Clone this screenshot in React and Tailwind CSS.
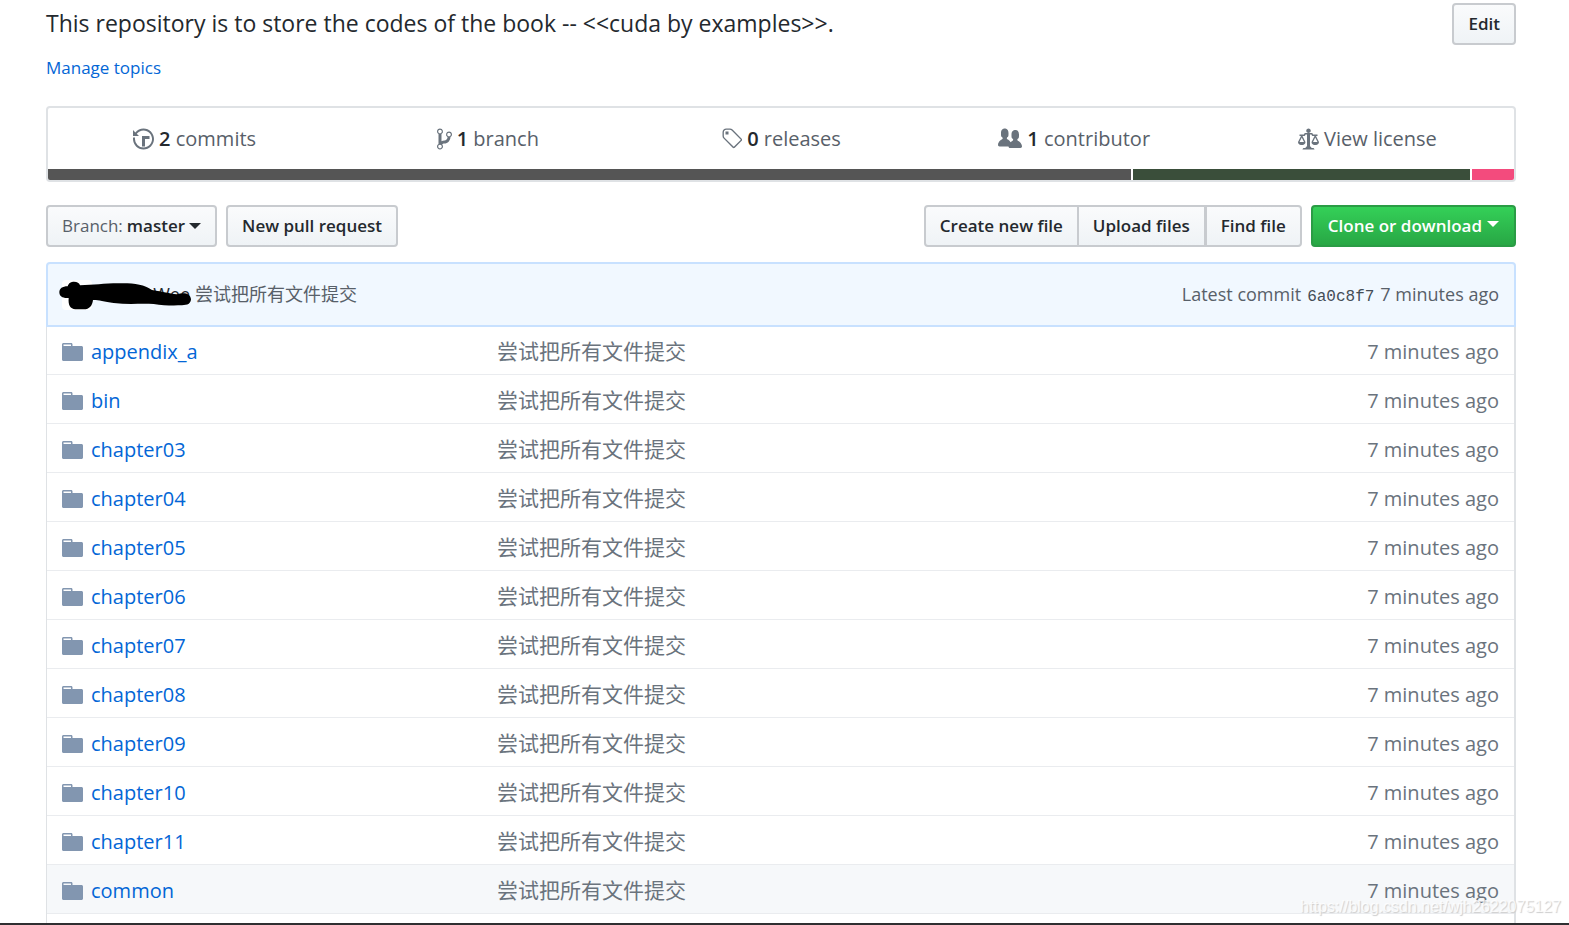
import React from "react";
import clsx from "clsx";

const MESSAGE = "尝试把所有文件提交";

const ICONS = {
  history: {
    width: 14,
    d: "M8 13H6V6h5v2H8v5zM7 1C4.81 1 2.87 2.02 1.59 3.59L0 2v4h4L2.5 4.5C3.55 3.17 5.17 2.3 7 2.3c3.14 0 5.7 2.56 5.7 5.7s-2.56 5.7-5.7 5.7A5.71 5.71 0 0 1 1.3 8c0-.34.03-.67.09-1H.08C.03 7.33 0 7.66 0 8c0 3.86 3.14 7 7 7s7-3.14 7-7-3.14-7-7-7z",
  },
  branch: {
    width: 10,
    d: "M10 5c0-1.11-.89-2-2-2a1.993 1.993 0 0 0-1 3.72v.3c-.02.52-.23.98-.63 1.38-.4.4-.86.61-1.38.63-.83.02-1.48.16-2 .45V4.72a1.993 1.993 0 0 0-1-3.72C.88 1 0 1.89 0 3a2 2 0 0 0 1 1.72v6.56c-.59.35-1 .99-1 1.72 0 1.11.89 2 2 2 1.11 0 2-.89 2-2 0-.53-.2-1-.53-1.36.09-.06.48-.41.59-.47.25-.11.56-.17.94-.17 1.05-.05 1.95-.45 2.75-1.25S8.95 7.77 9 6.73h-.02C9.59 6.37 10 5.73 10 5zM2 1.8c.66 0 1.2.55 1.2 1.2 0 .65-.55 1.2-1.2 1.2C1.35 4.2.8 3.65.8 3c0-.65.55-1.2 1.2-1.2zm0 12.41c-.66 0-1.2-.55-1.2-1.2 0-.65.55-1.2 1.2-1.2.65 0 1.2.55 1.2 1.2 0 .65-.55 1.2-1.2 1.2zm6-8c-.66 0-1.2-.55-1.2-1.2 0-.65.55-1.2 1.2-1.2.65 0 1.2.55 1.2 1.2 0 .65-.55 1.2-1.2 1.2z",
  },
  tag: {
    width: 14,
    d: "M7.73 1.73C7.26 1.26 6.62 1 5.96 1H3.5C2.13 1 1 2.13 1 3.5v2.47c0 .66.27 1.3.73 1.77l6.06 6.06c.39.39 1.02.39 1.41 0l4.59-4.59a.996.996 0 0 0 0-1.41L7.73 1.73zM2.38 7.09c-.31-.3-.47-.7-.47-1.13V3.5c0-.88.72-1.59 1.59-1.59h2.47c.42 0 .83.16 1.13.47l6.14 6.13-4.73 4.73-6.13-6.15zM3.01 3h2v2H3V3h.01z",
  },
  people: {
    width: 16,
    d: "M16 12.999c0 .439-.45 1-1 1H7.995c-.539 0-.994-.447-.995-.999H1c-.54 0-1-.561-1-1 0-2.634 3-4 3-4s.229-.409 0-1c-.841-.621-1.058-.59-1-3 .058-2.419 1.367-3 2.5-3s2.442.58 2.5 3c.058 2.41-.159 2.379-1 3-.229.59 0 1 0 1s1.549.711 2.42 2.088C9.196 9.369 10 8.999 10 8.999s.229-.409 0-1c-.841-.62-1.058-.59-1-3 .058-2.419 1.367-3 2.5-3s2.437.581 2.495 3c.059 2.41-.158 2.38-1 3-.229.59 0 1 0 1s3.005 1.366 3.005 4",
  },
  law: {
    width: 14,
    d: "M7 4c-.83 0-1.5-.67-1.5-1.5S6.17 1 7 1s1.5.67 1.5 1.5S7.83 4 7 4zm7 6c0 1.11-.89 2-2 2h-1c-1.11 0-2-.89-2-2l2-4h-1c-.55 0-1-.45-1-1H8v8c.42 0 1 .45 1 1h1c.42 0 1 .45 1 1H3c0-.55.58-1 1-1h1c0-.55.58-1 1-1h.03L6 5H5c0 .55-.45 1-1 1H3l2 4c0 1.11-.89 2-2 2H2c-1.11 0-2-.89-2-2l2-4H1V5h3c0-.55.45-1 1-1h4c.55 0 1 .45 1 1h3v1h-1l2 4zM2.5 7L1 10h3L2.5 7zM13 10l-1.5-3-1.5 3h3z",
  },
  folder: {
    width: 14,
    d: "M13 4H7V3c0-.66-.31-1-1-1H1c-.55 0-1 .45-1 1v10c0 .55.45 1 1 1h12c.55 0 1-.45 1-1V5c0-.55-.45-1-1-1zM6 4H1V3h5v1z",
  },
};

const STATS = [
  { icon: "history", count: 2, label: "commits" },
  { icon: "branch", count: 1, label: "branch" },
  { icon: "tag", count: 0, label: "releases" },
  { icon: "people", count: 1, label: "contributor" },
  { icon: "law", label: "View license" },
];

const LANGUAGES = [
  { name: "C", share: 74, color: "bg-[#555555]" },
  { name: "Cuda", share: 23, color: "bg-[#3a4e3a]" },
  { name: "C++", share: 2.9, color: "bg-[#f34b7d]" },
];

const FOLDERS = [
  "appendix_a",
  "bin",
  "chapter03",
  "chapter04",
  "chapter05",
  "chapter06",
  "chapter07",
  "chapter08",
  "chapter09",
  "chapter10",
  "chapter11",
  "common",
];

function Icon({ name, className }) {
  const { width, d } = ICONS[name];
  return (
    <svg
      viewBox={`0 0 ${width} 16`}
      className={clsx("h-6 w-auto shrink-0", className)}
      fill="currentColor"
      fillRule="evenodd"
      aria-hidden="true"
    >
      <path d={d} />
    </svg>
  );
}

function Caret({ className }) {
  return (
    <svg viewBox="0 0 12 6" className={clsx("h-[6px] w-3", className)} fill="currentColor" aria-hidden="true">
      <path d="M0 0h12L6 6z" />
    </svg>
  );
}

function Button({ children, className, primary }) {
  return (
    <button
      type="button"
      className={clsx(
        "flex h-[42px] items-center border-2 text-[17px] font-semibold whitespace-nowrap",
        primary
          ? "border-[#2a9c45] bg-linear-to-b from-[#34d058] to-[#28a745] px-[15px] text-white"
          : "border-[#c8cbcf] bg-linear-to-b from-[#fafbfc] to-[#eff3f6] px-[14px] text-[#24292e]",
        className
      )}
    >
      {children}
    </button>
  );
}

/* ================= SUMMARY ================= */
function Summary() {
  return (
    <div className="mt-6 overflow-hidden rounded border-2 border-[#dfe2e5]">
      <ul className="flex h-[61px] items-center">
        {STATS.map((stat) => (
          <li key={stat.label} className="flex-1">
            <a href="#" className="flex items-center justify-center gap-[5px] text-[20px] text-[#586069]">
              <Icon name={stat.icon} className="text-[#6a737d]" />
              <span>
                {stat.count !== undefined && (
                  <span className="font-semibold text-[#24292e]">{stat.count} </span>
                )}
                {stat.label}
              </span>
            </a>
          </li>
        ))}
      </ul>
      <div className="flex h-[11px] gap-[2px]">
        {LANGUAGES.map((lang) => (
          <span key={lang.name} title={lang.name} className={lang.color} style={{ flexGrow: lang.share }} />
        ))}
      </div>
    </div>
  );
}

/* ================= TOOLBAR ================= */
function Toolbar() {
  return (
    <div className="mt-[23px] flex items-center gap-[9px]">
      <Button className="rounded">
        <span className="font-normal text-[#586069]">Branch:</span>
        <span className="ml-1">master</span>
        <Caret className="ml-1" />
      </Button>
      <Button className="rounded">New pull request</Button>
      <div className="ml-auto flex">
        <Button className="rounded-l">Create new file</Button>
        <Button className="-ml-px border-l">Upload files</Button>
        <Button className="-ml-px rounded-r">Find file</Button>
      </div>
      <Button primary className="rounded">
        Clone or download
        <Caret className="mb-1 ml-[5px]" />
      </Button>
    </div>
  );
}

/* ================= LATEST COMMIT ================= */
function LatestCommit() {
  return (
    <div className="z-10 mt-[15px] flex h-[65px] shrink-0 items-center justify-between rounded-t border-2 border-[#c8e1ff] bg-[#f1f8ff] pr-[15px] pl-[14px] text-[18px] text-[#586069]">
      <div className="flex items-center">
        <div className="relative flex w-[133px] items-center justify-between">
          <span className="size-[30px] rounded bg-white" />
          <a href="#" className="mr-[5px] text-[#24292e]">Wee</a>
          {/* marker strokes hiding the author */}
          <svg viewBox="86 256 396 87" className="absolute top-px -left-[3px] h-[29px] w-[132px]" aria-hidden="true">
            <path d="M87 290C87 279 96 272 112 272C115 261 123 258 131 258C141 258 147 262 149 269C190 268 220 263 265 263C310 262 340 266 365 283C400 288 415 294 440 296C460 290 480 292 482 311C481 325 472 328 455 329C430 330 400 330 370 325C330 323 290 327 250 322C220 317 200 312 188 313C186 330 178 341 160 341H135C120 339 113 329 115 307C98 309 87 302 87 290Z" />
          </svg>
        </div>
        <a href="#">{MESSAGE}</a>
      </div>
      <div className="flex items-baseline gap-[6px]">
        <span>Latest commit</span>
        <a href="#" className="font-['Liberation_Mono',monospace] text-[16px] text-[#444d56]">6a0c8f7</a>
        <span>7 minutes ago</span>
      </div>
    </div>
  );
}

/* ================= FILE LIST ================= */
function FileList() {
  return (
    <div className="-mt-px flex-1 border-r-2 border-l border-[#dfe2e5]">
      <table className="w-full table-fixed border-separate border-spacing-0 text-[20px]">
        <tbody>
          {FOLDERS.map((name) => (
            <tr key={name} className={clsx(name === "common" && "bg-[#f6f8fa]")}>
              <td className="h-[49px] w-[450px] border-b border-[#eaecef] p-0 pt-[3px] pl-[15px]">
                <a href="#" className="flex items-center gap-2 text-[#0366d6]">
                  <Icon name="folder" className="text-[#8296b0]" />
                  {name}
                </a>
              </td>
              <td className="border-b border-[#eaecef] p-0 pt-[2px] text-[21px] leading-none text-[#6a737d]">
                {MESSAGE}
              </td>
              <td className="w-[200px] border-b border-[#eaecef] p-0 pt-[3px] pr-[15px] text-right text-[#6a737d]">
                7 minutes ago
              </td>
            </tr>
          ))}
        </tbody>
      </table>
    </div>
  );
}

/* ================= MAIN COMPONENT ================= */
export default function App() {
  return (
    <div className="relative flex h-screen flex-col overflow-hidden border-b-2 border-[#2f2f31] bg-white pr-[53px] pl-[46px] font-['Open_Sans','Noto_Sans_CJK_SC',sans-serif] text-[#24292e]">
      <div className="mt-[3px] flex items-start justify-between">
        <p className="text-[23px] leading-10">This repository is to store the codes of the book -- &lt;&lt;cuda by examples&gt;&gt;.</p>
        <Button className="rounded">Edit</Button>
      </div>
      <div className="mt-[9px]">
        <a href="#" className="block text-[17px] leading-7 text-[#0366d6]">Manage topics</a>
      </div>
      <Summary />
      <Toolbar />
      <LatestCommit />
      <FileList />
      <span className="absolute right-2 bottom-1 font-['Liberation_Sans',sans-serif] text-[16px] text-white/80 [text-shadow:1px_1px_1px_#cccccc]">
        https://blog.csdn.net/wjh2622075127
      </span>
    </div>
  );
}
